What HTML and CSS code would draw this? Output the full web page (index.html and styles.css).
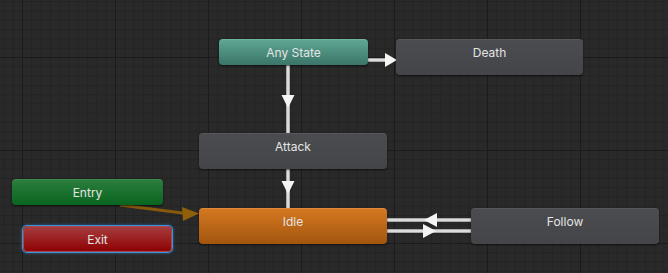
FILE: index.html
```html
<!DOCTYPE html>
<html>
<head>
  <title>Animator</title>
  <link rel="stylesheet" href="styles.css">
</head>
<body>
  <div class="graph">
    <svg class="links" width="668" height="273" viewBox="0 0 668 273">
      <!-- Any State -> Death -->
      <line class="link" x1="368" y1="60" x2="388" y2="60"/>
      <line class="link-core" x1="368" y1="60" x2="388" y2="60"/>
      <polygon class="head" points="385,53 397,60 385,67"/>

      <!-- Any State -> Attack -->
      <line class="link" x1="288" y1="65" x2="288" y2="133"/>
      <line class="link-core" x1="288" y1="65" x2="288" y2="133"/>
      <polygon class="head" points="281.5,95 294.5,95 288,108"/>

      <!-- Attack -> Idle -->
      <line class="link" x1="288" y1="169" x2="288" y2="208"/>
      <line class="link-core" x1="288" y1="169" x2="288" y2="208"/>
      <polygon class="head" points="281.5,181 294.5,181 288,194"/>

      <!-- Entry -> Idle -->
      <line class="link-entry" x1="120" y1="205" x2="190" y2="214"/>
      <polygon class="head-entry" points="182,207 199,213.5 183,221"/>

      <!-- Follow -> Idle -->
      <line class="link" x1="387" y1="220" x2="471" y2="220"/>
      <line class="link-core" x1="387" y1="220" x2="471" y2="220"/>
      <polygon class="head" points="437,213 424,220 437,227"/>

      <!-- Idle -> Follow -->
      <line class="link" x1="387" y1="231" x2="471" y2="231"/>
      <line class="link-core" x1="387" y1="231" x2="471" y2="231"/>
      <polygon class="head" points="423,224 436,231 423,238"/>
    </svg>

    <div class="node short any node-any">Any State</div>
    <div class="node tall node-death">Death</div>
    <div class="node tall node-attack">Attack</div>
    <div class="node short entry node-entry">Entry</div>
    <div class="node short exit node-exit">Exit</div>
    <div class="node tall idle node-idle">Idle</div>
    <div class="node tall node-follow">Follow</div>
  </div>
</body>
</html>
```

FILE: styles.css
```css
body {
  margin: 0;
  background: #282828;
  font-family: Inter, "Noto Sans", sans-serif;
}

.graph {
  position: relative;
  width: 668px;
  height: 273px;
  overflow: hidden;
  background-color: #292929;
  background-image:
    linear-gradient(to right, #1b1b1b 1px, transparent 1px),
    linear-gradient(to bottom, #1b1b1b 1px, transparent 1px),
    linear-gradient(to right, #232323 1px, transparent 1px),
    linear-gradient(to bottom, #232323 1px, transparent 1px);
  background-size: 93px 93px, 93px 93px, 9.3px 9.3px, 9.3px 9.3px;
  background-position: 22px 0, 0 57px, 22px 0, 0 57px;
}

.links {
  position: absolute;
  left: 0;
  top: 0;
}

.link {
  stroke: #a9a9a9;
  stroke-width: 4;
}

.link-core {
  stroke: #dcdcdc;
  stroke-width: 2;
}

.head {
  fill: #f4f4f4;
}

.link-entry {
  stroke: #86590b;
  stroke-width: 3;
}

.head-entry {
  fill: #8e600c;
}

.node {
  position: absolute;
  box-sizing: border-box;
  border-radius: 4px;
  color: #e4e4e4;
  font-size: 12px;
  line-height: 26px;
  text-align: center;
  background: linear-gradient(#4b4c50, #444548);
  border-top: 1px solid #57585c;
  box-shadow: 0 1px 2px rgba(0, 0, 0, 0.6);
}

.short {
  height: 26px;
  line-height: 25px;
}

.tall {
  height: 36px;
}

.any {
  background: linear-gradient(#5fa593, #3a7569);
  border-top-color: #6fb3a2;
}

.entry {
  background: linear-gradient(#2c7d3d, #08651f);
  border-top-color: #3a8b4a;
}

.exit {
  background: linear-gradient(#a63c3e, #8e0202);
  border: 1px solid #a64a4c;
  box-shadow: 0 0 0 1px #3e8fd8, 0 0 3px 1px rgba(62, 143, 216, 0.7);
}

.idle {
  background: linear-gradient(#d37820, #a3550f);
  border-top-color: #de8a3a;
}

.node-any { left: 219px; top: 39px; width: 149px; }
.node-death { left: 396px; top: 39px; width: 187px; }
.node-attack { left: 199px; top: 133px; width: 188px; }
.node-entry { left: 12px; top: 179px; width: 151px; }
.node-exit { left: 23px; top: 226px; width: 149px; }
.node-idle { left: 199px; top: 208px; width: 188px; }
.node-follow { left: 471px; top: 208px; width: 188px; }
```
